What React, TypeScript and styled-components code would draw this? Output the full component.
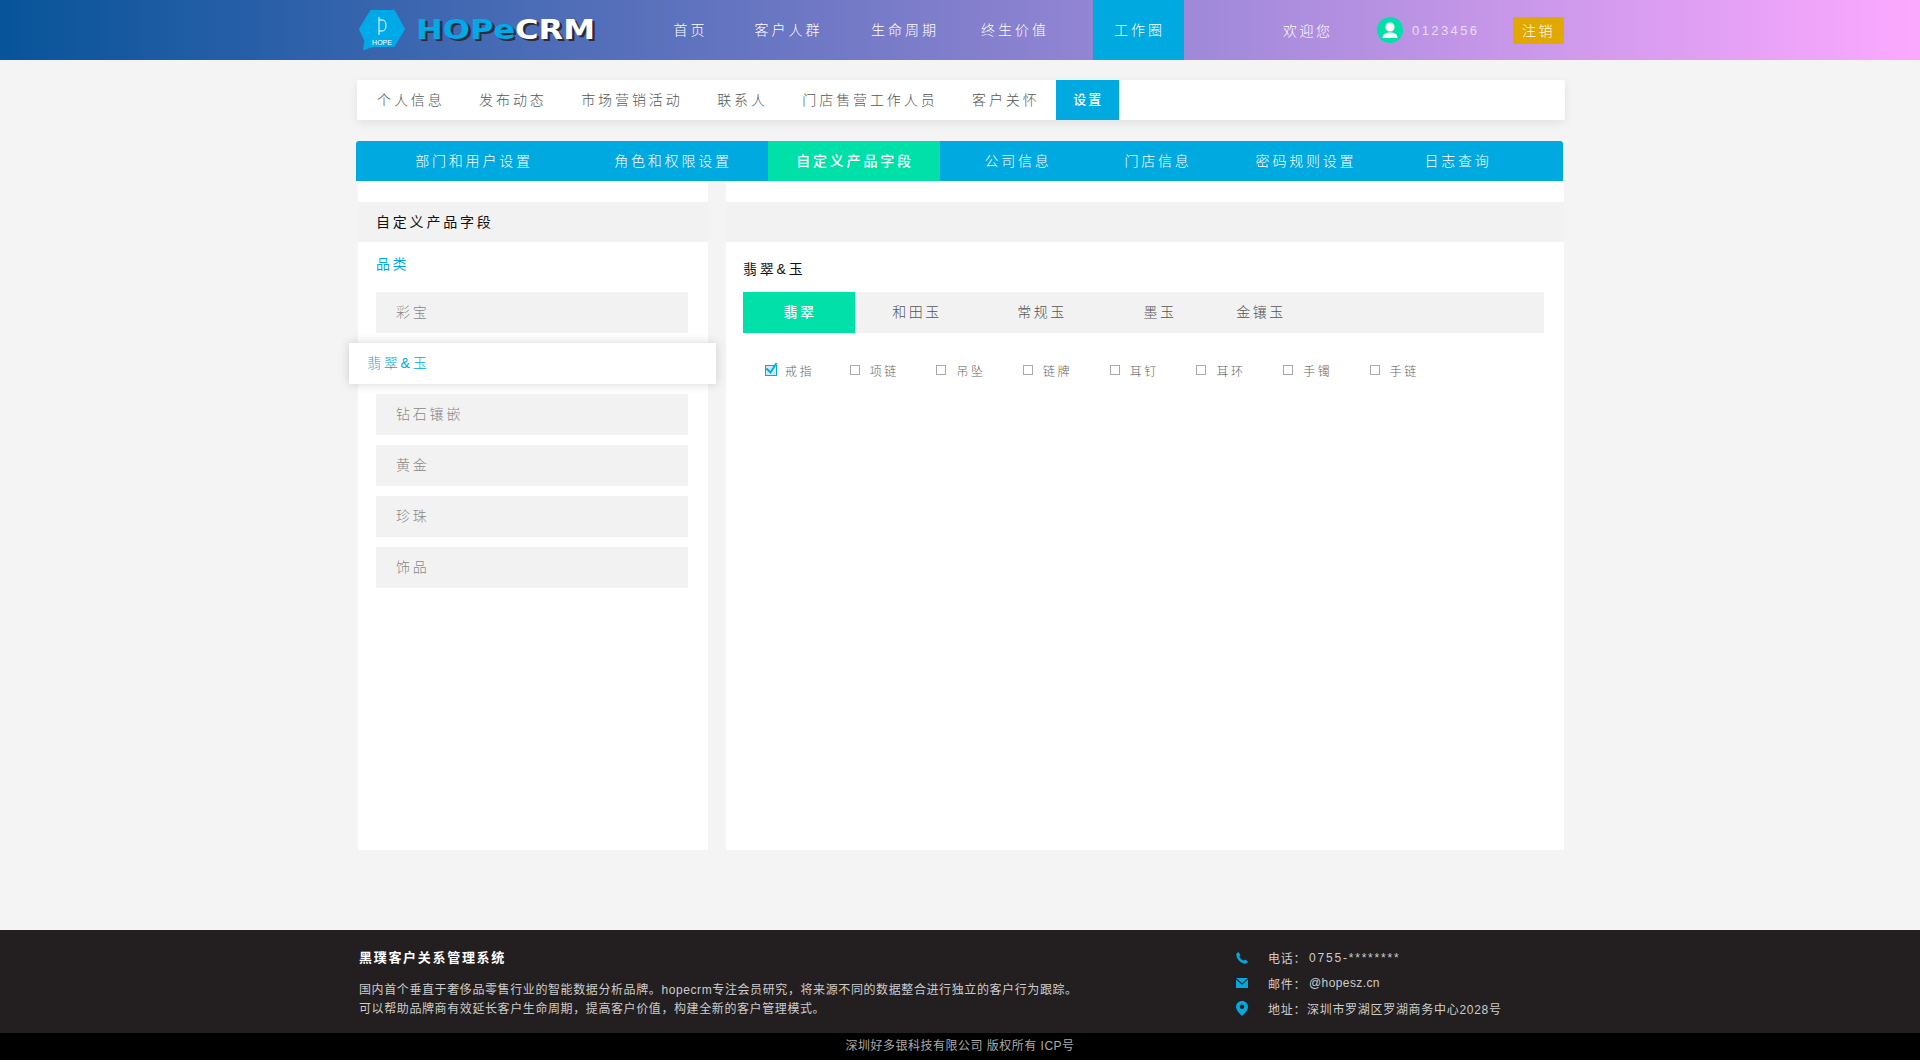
import React, { FC } from 'react'
import styled, { createGlobalStyle } from 'styled-components'

const GlobalStyle = createGlobalStyle`
  html, body {
    margin: 0;
    padding: 0;
    background: #f4f4f4;
    font-family: "Liberation Sans", "Noto Sans CJK SC", sans-serif;
  }
  * { box-sizing: border-box; }
`

const PageRoot = styled.div`
  width: 1920px;
  min-height: 1060px;
  display: flex;
  flex-direction: column;
`

const Container = styled.div`
  width: 1208px;
  margin: 0 auto;
`

const Header = styled.header`
  height: 60px;
  background: linear-gradient(90deg, #07549a 0%, #fca9ff 100%);
`

const HeaderInner = styled(Container)`
  display: flex;
  align-items: center;
  height: 60px;
`

const LogoBox = styled.div`
  width: 294px;
  height: 60px;
  display: flex;
  align-items: center;
  padding-left: 3px;
  gap: 11px;
`

const LogoText = styled.div`
  font-family: "DejaVu Sans", sans-serif;
  font-weight: 700;
  font-size: 26px;
  line-height: 30px;
  color: #00a9e8;
  white-space: nowrap;
  transform: scaleX(1.23);
  transform-origin: left center;
  text-shadow: 2px 2px 0 #2a2a3a;
  span { color: #fff; }
`

const NavLink = styled.a<{ $w: number; $active?: boolean }>`
  width: ${p => p.$w}px;
  height: 60px;
  line-height: 60px;
  padding-left: 2px;
  text-align: center;
  color: #fff;
  font-size: 14px;
  letter-spacing: 3px;
  font-weight: 300;
  background: ${p => (p.$active ? '#00a9e0' : 'transparent')};
`

const NavSpacer = styled.div<{ $w: number }>`
  width: ${p => p.$w}px;
`

const Welcome = styled.div`
  width: 48px;
  margin-left: 99px;
  color: #fff;
  font-size: 14px;
  font-weight: 300;
  letter-spacing: 2.5px;
  white-space: nowrap;
`

const Avatar = styled.div`
  width: 26px;
  height: 26px;
  margin-left: 46px;
  border-radius: 50%;
  background: #00e0a8;
  overflow: hidden;
`

const UserId = styled.div`
  margin-left: 9px;
  width: 100px;
  color: rgba(255, 255, 255, 0.7);
  font-size: 13px;
  letter-spacing: 2.4px;
`

const LogoutButton = styled.button`
  margin-left: auto;
  width: 51px;
  height: 27px;
  border: 0;
  border-radius: 2px;
  background: #e0a800;
  color: #fff;
  font-family: inherit;
  font-size: 14px;
  font-weight: 300;
  letter-spacing: 2.5px;
  padding: 0;
`

const Main = styled.main`
  flex: 1;
  padding: 20px 0 80px;
`

const SubNav = styled.nav`
  display: flex;
  height: 40px;
  margin: 0 -1px 0 1px;
  padding-left: 2px;
  background: #fff;
  border-radius: 2px;
  box-shadow: 0 3px 10px rgba(0, 0, 0, 0.08);
`

const SubNavItem = styled.a<{ $active?: boolean }>`
  height: 40px;
  line-height: 40px;
  padding: ${p => (p.$active ? '0 16px 0 17px' : '0 16.5px 0 18px')};
  font-size: ${p => (p.$active ? '13px' : '14px')};
  font-weight: ${p => (p.$active ? 500 : 300)};
  letter-spacing: ${p => (p.$active ? '2px' : '2.9px')};
  color: ${p => (p.$active ? '#fff' : '#555')};
  background: ${p => (p.$active ? '#00a9e0' : 'transparent')};
  white-space: nowrap;
`

const SectionNav = styled.nav`
  display: flex;
  height: 40px;
  margin: 21px 1px 0 0;
  padding-left: 14px;
  background: #00a9e0;
  border-radius: 3px 3px 0 0;
`

const SectionNavItem = styled.a<{ $w: number; $active?: boolean }>`
  width: ${p => p.$w}px;
  height: 40px;
  line-height: 40px;
  padding-left: 2px;
  text-align: center;
  color: #fff;
  font-size: 14px;
  letter-spacing: 2.8px;
  font-weight: ${p => (p.$active ? 500 : 300)};
  background: ${p => (p.$active ? '#00e0a8' : 'transparent')};
  white-space: nowrap;
`

const Columns = styled.div`
  display: flex;
  align-items: stretch;
  height: 669px;
  padding-left: 2px;
`

const LeftPanel = styled.aside`
  width: 350px;
  padding-top: 21px;
  background: #fff;
`

const RightPanel = styled.section`
  width: 838px;
  margin-left: 18px;
  padding-top: 21px;
  background: #fff;
`

const PanelHead = styled.div`
  height: 40px;
  line-height: 40px;
  padding-left: 18px;
  background: #f2f2f2;
  color: #111;
  font-size: 14px;
  letter-spacing: 2.8px;
`

const CategoryLabel = styled.div`
  height: 50px;
  line-height: 44px;
  padding-left: 18px;
  color: #00a9e0;
  font-size: 14px;
  letter-spacing: 2.5px;
`

const CategoryList = styled.div`
  display: flex;
  flex-direction: column;
  gap: 10px;
  padding: 0 20px 0 18px;
`

const CategoryItem = styled.div<{ $active?: boolean }>`
  position: relative;
  height: 41px;
  line-height: 41px;
  font-size: 14px;
  font-weight: 300;
  letter-spacing: 2.8px;
  margin: ${p => (p.$active ? '0 -28px 0 -27px' : '0')};
  padding-left: ${p => (p.$active ? '18px' : '20px')};
  color: ${p => (p.$active ? '#00a9e0' : '#888')};
  background: ${p => (p.$active ? '#fff' : '#f2f2f2')};
  box-shadow: ${p => (p.$active ? '0 0 10px rgba(0, 0, 0, 0.16)' : 'none')};
`

const ContentBody = styled.div`
  padding: 0 20px 0 17px;
`

const ContentTitle = styled.div`
  height: 50px;
  line-height: 55px;
  color: #111;
  font-size: 14px;
  letter-spacing: 2.8px;
`

const TypeTabs = styled.div`
  display: flex;
  height: 41px;
  background: #f2f2f2;
`

const TypeTab = styled.a<{ $w: number; $active?: boolean }>`
  width: ${p => p.$w}px;
  height: 41px;
  line-height: 41px;
  padding-left: 2px;
  text-align: center;
  font-size: 14px;
  letter-spacing: 2.5px;
  color: ${p => (p.$active ? '#fff' : '#555')};
  background: ${p => (p.$active ? '#00e0a8' : 'transparent')};
  font-weight: ${p => (p.$active ? 500 : 300)};
`

const CheckRow = styled.div`
  display: flex;
  margin-top: 27px;
  padding-left: 20px;
`

const CheckItem = styled.label`
  display: flex;
  align-items: center;
  width: 86.7px;
  height: 20px;
  color: #666;
  font-size: 12px;
  font-weight: 300;
  letter-spacing: 2.5px;
`

const CheckBox = styled.span<{ $checked?: boolean }>`
  position: relative;
  width: ${p => (p.$checked ? '12px' : '10px')};
  height: ${p => (p.$checked ? '11px' : '10px')};
  margin: ${p => (p.$checked ? '0 8px 0 2px' : '0 10px 0 0')};
  border: 1.5px solid ${p => (p.$checked ? '#00a9e0' : '#aaa')};
  background: ${p => (p.$checked ? '#c8ecf9' : '#fff')};
  svg { position: absolute; left: 0; top: -5px; }
`

const Footer = styled.footer`
  background: #231f20;
`

const FooterInner = styled(Container)`
  display: flex;
  justify-content: space-between;
  height: 103px;
  padding: 16px 0 0 3px;
`

const FooterAbout = styled.div`
  color: #ccc;
  font-size: 12px;
  line-height: 19px;
  letter-spacing: 0.6px;
`

const FooterTitle = styled.div`
  color: #fff;
  font-size: 13px;
  font-weight: 700;
  letter-spacing: 1.7px;
  line-height: 24px;
  margin-bottom: 11px;
`

const FooterContacts = styled.div`
  width: 328px;
  margin-top: -1px;
  display: flex;
  flex-direction: column;
`

const ContactRow = styled.div`
  display: flex;
  align-items: center;
  height: 25.5px;
  color: #ccc;
  font-size: 12px;
  letter-spacing: 0.7px;
  white-space: nowrap;
  svg { flex: none; width: 12px; }
`

const ContactLabel = styled.span`
  width: 41px;
  margin-left: 20px;
`

const ContactValue = styled.span<{ $ls: number; $offset?: number }>`
  letter-spacing: ${p => p.$ls}px;
  margin-left: ${p => p.$offset || 0}px;
`

const Copyright = styled.div`
  height: 27px;
  line-height: 27px;
  text-align: center;
  background: #000;
  color: #aaa;
  font-size: 12px;
  letter-spacing: 0.5px;
`

const Logo: FC = () => (
  <svg width="46" height="42" viewBox="0 0 46 42">
    <path d="M12 2H35L45 20 35 37H13L5 40 6.500 32 1 20Z" fill="#00a9e8" stroke="#00a9e8" strokeWidth="2" strokeLinejoin="round" />
    <path d="M20 8V26M20 11H23Q27 11 27 16Q27 22 23 22H20" stroke="#fff" strokeWidth="1" fill="none" />
    <text x="23" y="35.500" textAnchor="middle" fontSize="7" fill="#fff" fontFamily="Liberation Sans">HOPE</text>
  </svg>
)

const UserIcon: FC = () => (
  <svg width="26" height="26" viewBox="0 0 26 26">
    <circle cx="13" cy="10" r="4.600" fill="#fff" />
    <path d="M5.500 21c0-4 3.500-5.500 7.500-5.500s7.500 1.500 7.500 5.500z" fill="#fff" />
  </svg>
)

const PhoneIcon: FC = () => (
  <svg height="12" viewBox="0 0 12 12">
    <path d="M2.600 0.300 4.400 3.200 3.300 4.500C4 6.300 5.700 8 7.600 8.800L9 7.600 11.700 9.400C11.500 10.700 10.600 11.600 9.400 11.700 4.700 11.400 0.600 7.200 0.300 2.500 0.400 1.400 1.300 0.500 2.600 0.300Z" fill="#00a9e0" />
  </svg>
)

const MailIcon: FC = () => (
  <svg height="10" viewBox="0 0 12 10">
    <path d="M0 0H12L6 5.200ZM0 1.600V10H12V1.600L6 6.800Z" fill="#00a9e0" />
  </svg>
)

const PinIcon: FC = () => (
  <svg height="15" viewBox="0 0 12 15">
    <path fillRule="evenodd" d="M6 0C9.300 0 12 2.600 12 5.800 12 9.300 8.500 12.500 6 15 3.500 12.500 0 9.300 0 5.800 0 2.600 2.700 0 6 0ZM6 3.500A2.300 2.300 0 1 0 6 8.100 2.300 2.300 0 1 0 6 3.500Z" fill="#00a9e0" />
  </svg>
)

const TickIcon: FC = () => (
  <svg width="13" height="14" viewBox="0 0 13 14" style={{ overflow: 'visible' }}>
    <path d="M0.500 7.500 4.500 11.500 10.500 2" stroke="#00a9e0" strokeWidth="1.800" fill="none" />
  </svg>
)

const subNav = ['个人信息', '发布动态', '市场营销活动', '联系人', '门店售营工作人员', '客户关怀']
const sectionNav = [
  { label: '部门和用户设置', w: 206 },
  { label: '角色和权限设置', w: 192 },
  { label: '自定义产品字段', w: 172, active: true },
  { label: '公司信息', w: 154 },
  { label: '门店信息', w: 126 },
  { label: '密码规则设置', w: 170 },
  { label: '日志查询', w: 134 },
]
const categories = ['彩宝', '翡翠&玉', '钻石镶嵌', '黄金', '珍珠', '饰品']
const typeTabs = [
  { label: '翡翠', w: 112, active: true },
  { label: '和田玉', w: 122 },
  { label: '常规玉', w: 128 },
  { label: '墨玉', w: 108 },
  { label: '金镶玉', w: 94 },
]
const checks = ['戒指', '项链', '吊坠', '链牌', '耳钉', '耳环', '手镯', '手链']

export default function App() {
  return (
    <PageRoot>
      <GlobalStyle />
      <Header>
        <HeaderInner>
          <LogoBox>
            <Logo />
            <LogoText>HOPe<span>CRM</span></LogoText>
          </LogoBox>
          <NavLink $w={79}>首页</NavLink>
          <NavLink $w={117}>客户人群</NavLink>
          <NavLink $w={116}>生命周期</NavLink>
          <NavLink $w={104}>终生价值</NavLink>
          <NavSpacer $w={27} />
          <NavLink $w={91} $active>工作圈</NavLink>
          <Welcome>欢迎您</Welcome>
          <Avatar><UserIcon /></Avatar>
          <UserId>0123456</UserId>
          <LogoutButton>注销</LogoutButton>
        </HeaderInner>
      </Header>
      <Main>
        <Container>
          <SubNav>
            {subNav.map(label => <SubNavItem key={label}>{label}</SubNavItem>)}
            <SubNavItem $active>设置</SubNavItem>
          </SubNav>
          <SectionNav>
            {sectionNav.map(item => (
              <SectionNavItem key={item.label} $w={item.w} $active={item.active}>{item.label}</SectionNavItem>
            ))}
          </SectionNav>
          <Columns>
            <LeftPanel>
              <PanelHead>自定义产品字段</PanelHead>
              <CategoryLabel>品类</CategoryLabel>
              <CategoryList>
                {categories.map((label, i) => (
                  <CategoryItem key={label} $active={i === 1}>{label}</CategoryItem>
                ))}
              </CategoryList>
            </LeftPanel>
            <RightPanel>
              <PanelHead />
              <ContentBody>
                <ContentTitle>翡翠&amp;玉</ContentTitle>
                <TypeTabs>
                  {typeTabs.map(tab => (
                    <TypeTab key={tab.label} $w={tab.w} $active={tab.active}>{tab.label}</TypeTab>
                  ))}
                </TypeTabs>
                <CheckRow>
                  {checks.map((label, i) => (
                    <CheckItem key={label}>
                      <CheckBox $checked={i === 0}>{i === 0 && <TickIcon />}</CheckBox>
                      {label}
                    </CheckItem>
                  ))}
                </CheckRow>
              </ContentBody>
            </RightPanel>
          </Columns>
        </Container>
      </Main>
      <Footer>
        <FooterInner>
          <FooterAbout>
            <FooterTitle>黑璞客户关系管理系统</FooterTitle>
            国内首个垂直于奢侈品零售行业的智能数据分析品牌。hopecrm专注会员研究，将来源不同的数据整合进行独立的客户行为跟踪。
            <br />
            可以帮助品牌商有效延长客户生命周期，提高客户价值，构建全新的客户管理模式。
          </FooterAbout>
          <FooterContacts>
            <ContactRow><PhoneIcon /><ContactLabel>电话：</ContactLabel><ContactValue $ls={1.8}>0755-********</ContactValue></ContactRow>
            <ContactRow><MailIcon /><ContactLabel>邮件：</ContactLabel><ContactValue $ls={0.4}>@hopesz.cn</ContactValue></ContactRow>
            <ContactRow><PinIcon /><ContactLabel>地址：</ContactLabel><ContactValue $ls={0.7} $offset={-2}>深圳市罗湖区罗湖商务中心2028号</ContactValue></ContactRow>
          </FooterContacts>
        </FooterInner>
        <Copyright>深圳好多银科技有限公司 版权所有 ICP号</Copyright>
      </Footer>
    </PageRoot>
  )
}
